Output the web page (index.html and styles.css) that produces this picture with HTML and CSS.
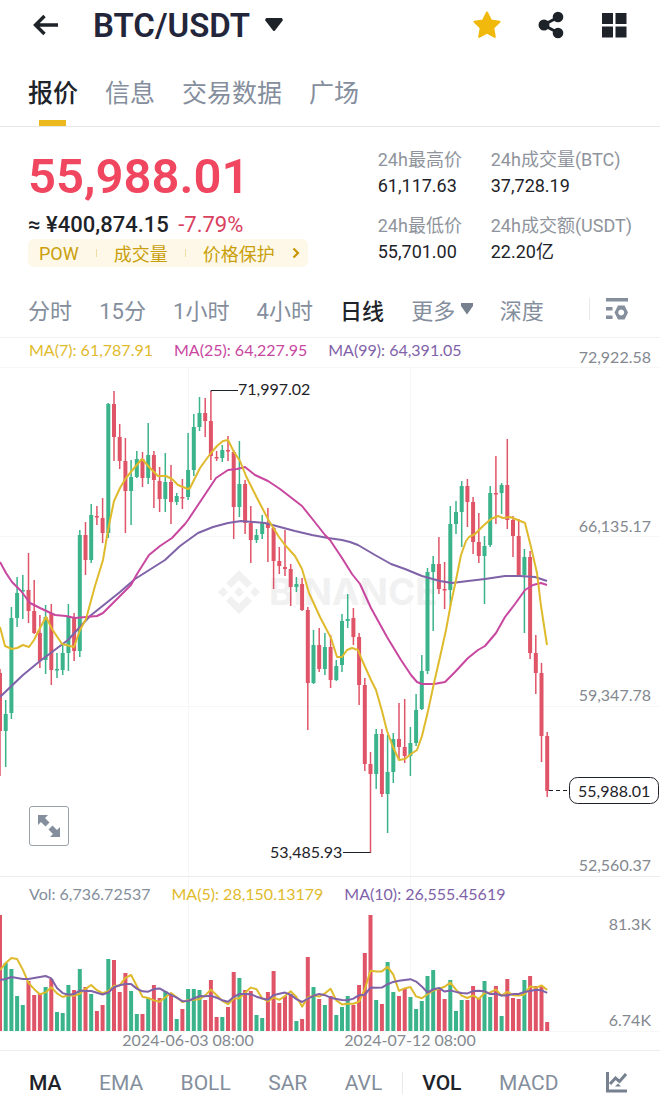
FILE: index.html
```html
<!DOCTYPE html>
<html lang="zh-CN">
<head>
    <meta charset="UTF-8">
    <meta name="viewport" content="width=device-width, initial-scale=1.0">
    <title>BTC/USDT</title>
    <link rel="stylesheet" href="styles.css">
</head>
<body>
    <header class="topbar">
        <button class="icon-btn" aria-label="返回">
            <svg width="28" height="24" viewBox="0 0 28 24"><path d="M26 12H4M12.500 3L3.500 12l9 9" fill="none" stroke="#1e2329" stroke-width="3.400"/></svg>
        </button>
        <button class="pair">BTC/USDT
            <svg width="18" height="14" viewBox="0 0 18 14"><path d="M1.500 0h15q1.500 0 1.200 2.500L10 12.500q-1 1-2 0L.3 2.500Q0 0 1.500 0z" fill="#1e2329"/></svg>
        </button>
        <div class="actions">
            <button class="icon-btn" aria-label="收藏">
                <svg width="28" height="28" viewBox="0 0 28 28"><path d="M14 1.500l4 8 8.500 1.200-6.200 6.200 1.500 9L14 21.700 6.200 25.900l1.500-9L1.500 10.700 10 9.500z" fill="#f0b90b" stroke="#f0b90b" stroke-width="2" stroke-linejoin="round"/></svg>
            </button>
            <button class="icon-btn" aria-label="分享">
                <svg width="26" height="28" viewBox="0 0 26 28"><path d="M20.500 6L5.500 14l15 8" fill="none" stroke="#1e2329" stroke-width="3"/><circle cx="20" cy="6" r="5.300" fill="#1e2329"/><circle cx="6" cy="14" r="5.500" fill="#1e2329"/><circle cx="20" cy="22" r="5.300" fill="#1e2329"/></svg>
            </button>
            <button class="icon-btn" aria-label="菜单">
                <svg width="26" height="26" viewBox="0 0 26 26"><path d="M1 1h11v11H1zM14.500 1h11v11h-11zM1 14.500h11v11H1zM14.500 14.500h11v11h-11z" fill="#1e2329"/></svg>
            </button>
        </div>
    </header>

    <nav class="tabs">
        <a href="#" class="active">报价</a>
        <a href="#">信息</a>
        <a href="#">交易数据</a>
        <a href="#">广场</a>
    </nav>

    <section class="quote">
        <div class="quote-main">
            <div class="price">55,988.01</div>
            <div class="fiat">≈ ¥400,874.15 <span class="change">-7.79%</span></div>
            <a href="#" class="tags">
                <span>POW</span><i></i><span>成交量</span><i></i><span>价格保护</span>
                <svg width="8" height="12" viewBox="0 0 8 12"><path d="M1.500 1.500L6 6l-4.500 4.500" fill="none" stroke="#c99400" stroke-width="2.200"/></svg>
            </a>
        </div>
        <dl class="stats">
            <div><dt>24h最高价</dt><dd>61,117.63</dd></div>
            <div><dt>24h成交量(BTC)</dt><dd>37,728.19</dd></div>
            <div><dt>24h最低价</dt><dd>55,701.00</dd></div>
            <div><dt>24h成交额(USDT)</dt><dd>22.20亿</dd></div>
        </dl>
    </section>

    <nav class="intervals">
        <button>分时</button>
        <button>15分</button>
        <button>1小时</button>
        <button>4小时</button>
        <button class="active">日线</button>
        <button class="dropdown">更多 <svg width="12" height="12" viewBox="0 0 12 12"><path d="M0 0h12v3L6 11.500 0 3z" fill="#76808f"/></svg></button>
        <button>深度</button>
        <button class="settings" aria-label="设置">
            <svg width="22" height="22" viewBox="0 0 22 22"><g fill="#848e9c"><path d="M0 0h22v3.500H0zM0 9h6.500v3.500H0zM0 17.500h6.500V21H0z"/><path fill-rule="evenodd" d="M12 7.500h6.500l3.500 7-3.500 7H12l-3.500-7zM15.200 11.500a3 3 0 1 0 .01 0z"/></g></svg>
        </button>
    </nav>

    <section class="chart">
        <div class="legend">
            <span class="ma-a">MA(7): 61,787.91</span>
            <span class="ma-b">MA(25): 64,227.95</span>
            <span class="ma-c">MA(99): 64,391.05</span>
        </div>
        <svg id="priceChart" viewBox="0 338 660 538"></svg>
        <button class="expand" aria-label="全屏">
            <svg width="26" height="26" viewBox="0 0 26 26"><g fill="#848e9c"><path d="M2 2h10L9 5l4.500 4.500-4 4L5 9l-3 3zM24 24H14l3-3-4.500-4.500 4-4L21 17l3-3z"/></g></svg>
        </button>
    </section>

    <section class="chart volume">
        <div class="legend">
            <span>Vol: 6,736.72537</span>
            <span class="ma-a">MA(5): 28,150.13179</span>
            <span class="ma-c">MA(10): 26,555.45619</span>
        </div>
        <svg id="volumeChart" viewBox="0 877 660 173"></svg>
    </section>

    <nav class="indicators">
        <button class="active">MA</button>
        <button>EMA</button>
        <button>BOLL</button>
        <button>SAR</button>
        <button>AVL</button>
        <i></i>
        <button class="active">VOL</button>
        <button>MACD</button>
        <button class="more" aria-label="指标">
            <svg width="21" height="21" viewBox="0 0 21 21"><path d="M1.500 0v19H21M4 12l5.500-6 4 3.500L20 2" fill="none" stroke="#76808f" stroke-width="3"/><path d="M9 14.500l3-3 3 3z" fill="#76808f"/></svg>
        </button>
    </nav>

    <script src="chart.js"></script>
</body>
</html>
```
FILE: styles.css
```css
* {
    box-sizing: border-box;
}
body {
    margin: 0;
    background-color: #fff;
    color: #1e2329;
    font-family: Roboto, "Noto Sans CJK SC", sans-serif;
}
button {
    padding: 0;
    border: none;
    background: none;
    color: inherit;
    font: inherit;
    white-space: nowrap;
    cursor: pointer;
}
a {
    color: inherit;
    text-decoration: none;
}
svg {
    display: block;
}
.topbar {
    display: flex;
    align-items: center;
    height: 50px;
    padding: 0 33px 0 32px;
}
.pair {
    display: flex;
    align-items: center;
    gap: 15px;
    margin-left: 33px;
    color: #23263b;
    font-size: 33px;
    font-weight: 600;
}
.actions {
    display: flex;
    align-items: center;
    gap: 37px;
    margin-left: auto;
}
.tabs {
    display: flex;
    gap: 27px;
    height: 77px;
    padding: 0 28px;
    border-bottom: 1px solid #e6e8ea;
    color: #848e9c;
    font-size: 25px;
    line-height: 88px;
}
.tabs a {
    position: relative;
    height: 76px;
}
.tabs .active {
    color: #1e2329;
    font-weight: 500;
}
.tabs .active::after {
    content: "";
    position: absolute;
    bottom: 0;
    left: 11px;
    width: 27px;
    height: 6px;
    background-color: #ebb91e;
}
.quote {
    display: flex;
    justify-content: space-between;
    height: 158px;
    padding: 20px 28px 0;
}
.price {
    color: #f0465f;
    font-size: 49px;
    font-weight: 600;
    line-height: 60px;
}
.fiat {
    padding-top: 4px;
    font-size: 22px;
    font-weight: 500;
    line-height: 28px;
}
.change {
    margin-left: 4px;
    color: #d9415f;
    font-weight: 400;
}
.tags {
    display: flex;
    align-items: center;
    gap: 17px;
    height: 28px;
    padding: 0 8px 0 11px;
    border-radius: 6px;
    background-color: #fef8e8;
    color: #c99f0c;
    font-size: 18px;
}
.tags i {
    width: 1px;
    height: 8px;
    background-color: #efdca6;
}
.stats {
    display: grid;
    grid-template-columns: 85px auto;
    gap: 14px 28px;
    align-content: start;
    margin: 0;
    font-size: 18px;
    line-height: 26px;
}
.stats dt {
    color: #8f949c;
    white-space: nowrap;
}
.stats dd {
    margin: 0;
}
.intervals {
    display: flex;
    align-items: center;
    justify-content: space-between;
    height: 53px;
    padding: 0 32px 4px 28px;
    border-bottom: 1px solid #f0f1f2;
    color: #848e9c;
    font-size: 22px;
}
.dropdown svg {
    display: inline-block;
    vertical-align: 4px;
}
.intervals .active,
.indicators .active {
    color: #1e2329;
    font-weight: 500;
}
.intervals .settings {
    margin-left: 18px;
    padding-left: 16px;
    border-left: 1px solid #e6e8ea;
}
.chart {
    position: relative;
    border-bottom: 1px solid #eaecef;
    font-family: Lato, sans-serif;
}
.chart > svg {
    width: 100%;
    height: auto;
}
.legend {
    position: absolute;
    top: 2px;
    left: 29px;
    display: flex;
    gap: 21px;
    color: #848e9c;
    font-size: 16px;
    line-height: 20px;
}
.volume .legend {
    top: 7px;
}
.ma-a {
    color: #dfba2c;
}
.ma-b {
    color: #c8479f;
}
.ma-c {
    color: #7f62a8;
}
.expand {
    position: absolute;
    bottom: 30px;
    left: 29px;
    display: grid;
    place-items: center;
    width: 40px;
    height: 40px;
    border: 1px solid #9aa1ab;
    border-radius: 3px;
    background-color: #fff;
}
.indicators {
    display: flex;
    align-items: center;
    justify-content: space-between;
    height: 55px;
    padding: 8px 33px 0 29px;
    color: #848e9c;
    font-size: 21px;
}
.indicators i {
    width: 1px;
    height: 22px;
    margin: 0 -18px;
    background-color: #e6e8ea;
}
.indicators .more {
    margin-left: 10px;
}
/* chart */
.up {
    fill: #3bb38b;
}
.down {
    fill: #e05468;
}
.grid {
    stroke: #f7f7f8;
    stroke-width: 1;
}
.line {
    fill: none;
    stroke-width: 2;
    stroke-linejoin: round;
}
.line.ma-a {
    stroke: #dfba2c;
}
.line.ma-b {
    stroke: #c8479f;
}
.line.ma-c {
    stroke: #7f62a8;
}
.axis {
    fill: #84888f;
    font-size: 16px;
    text-anchor: end;
}
.date {
    fill: #84888f;
    font-size: 16px;
    text-anchor: middle;
}
.mark {
    fill: #1e2329;
    font-size: 16px;
}
.leader {
    fill: none;
    stroke: #1e2329;
    stroke-width: 1;
}
.last-box {
    fill: #fff;
    stroke: #1e2329;
}
.watermark {
    fill: #f1f1f2;
    font-family: Inter, sans-serif;
    font-size: 37px;
    font-weight: 700;
}
```
FILE: chart.js
```js
const STEP = 5.7;

// high, body top, body bottom, low (chart y), direction
const candles = [
    [669,673,731,776,'d'],[700,714,731,767,'u'],[607,618,713,719,'u'],[577,593,618,627,'u'],[575,590,591,619,'u'],
    [553,590,611,623,'d'],[580,611,633,634,'d'],[615,633,661,668,'d'],[605,617,660,674,'u'],[604,613,670,685,'d'],
    [653,669,670,678,'u'],[645,653,670,675,'u'],[604,616,653,671,'u'],[613,617,651,661,'d'],[530,535,651,657,'u'],
    [522,535,560,575,'d'],[504,515,560,563,'u'],[506,516,517,525,'d'],[498,518,533,543,'d'],[403,404,533,538,'u'],
    [391,404,437,461,'d'],[424,437,461,469,'d'],[438,461,491,533,'d'],[460,477,491,525,'u'],[451,459,477,478,'u'],
    [452,459,478,487,'d'],[423,455,478,484,'u'],[451,455,480,508,'d'],[467,481,499,512,'d'],[453,482,499,512,'u'],
    [465,482,502,524,'d'],[493,496,502,505,'u'],[479,497,498,509,'d'],[433,470,497,500,'u'],[414,427,470,476,'u'],
    [397,413,427,431,'u'],[398,413,421,437,'d'],[391,421,456,480,'d'],[451,457,458,461,'d'],[445,450,458,462,'u'],
    [436,450,451,461,'d'],[450,452,507,539,'d'],[441,484,507,517,'u'],[480,484,523,534,'d'],[506,523,540,563,'d'],
    [529,535,540,543,'u'],[515,523,534,539,'u'],[508,523,528,562,'d'],[527,528,561,589,'d'],[547,561,566,574,'d'],
    [530,567,569,576,'d'],[564,569,587,606,'d'],[577,584,587,592,'u'],[578,584,610,611,'d'],[607,610,683,730,'d'],
    [630,645,683,684,'u'],[628,645,669,672,'d'],[633,647,669,675,'u'],[635,647,680,688,'d'],[660,666,680,681,'u'],
    [614,621,665,672,'u'],[594,619,621,628,'u'],[608,618,637,645,'d'],[633,637,685,705,'d'],[678,685,764,771,'d'],
    [752,764,774,853,'d'],[729,734,774,789,'u'],[729,734,794,797,'d'],[735,772,794,833,'u'],[733,739,772,783,'u'],
    [703,739,747,760,'d'],[699,747,756,763,'d'],[727,743,756,776,'u'],[694,710,743,746,'u'],[655,671,709,710,'u'],
    [568,572,671,674,'u'],[556,564,572,631,'u'],[537,564,589,594,'d'],[562,589,590,609,'d'],[506,524,590,607,'u'],
    [501,512,524,534,'u'],[481,486,512,547,'u'],[479,486,502,527,'d'],[497,502,542,554,'d'],[513,542,556,563,'d'],
    [536,546,556,604,'u'],[486,493,545,547,'u'],[456,493,494,524,'d'],[483,485,493,514,'u'],[439,485,520,529,'d'],
    [516,520,536,557,'d'],[519,536,576,576,'d'],[549,557,575,633,'u'],[551,557,653,659,'d'],[635,653,673,694,'d'],
    [663,673,736,762,'d'],[732,736,791,797,'d']
];

const volumes = [
    116,68,62,35,26,50,36,37,44,52,19,18,46,41,62,44,37,20,26,72,71,39,58,40,17,17,33,46,33,40,38,12,22,42,42,41,
    31,51,14,14,24,59,53,41,40,16,13,39,60,28,35,37,10,12,74,44,32,26,35,16,24,35,26,46,78,116,31,27,69,39,35,43,
    34,22,30,55,61,43,32,51,20,31,31,45,33,50,34,45,15,52,33,32,51,55,45,45,9
];

const ma7 = '0,627 5,646 12,649 17,648 23,645 29,647 34,640 40,628 46,617 52,629 62,644 74,647 80,630 86,619 95,586 103,560 108,530 114,501 120,488 126,478 135,467 142,459 150,468 158,476 166,476 172,479 178,485 188,489 190,488 194,480 200,468 205,461 211,453 217,446 223,441 228,440 234,452 240,461 246,476 257,498 269,521 279,537 285,545 295,556 302,569 309,593 320,617 331,638 337,657 342,657 347,650 352,648 358,650 362,660 371,680 376,690 382,711 387,731 393,747 399,760 405,759 411,754 417,750 422,736 428,711 434,683 440,657 446,630 451,603 456,580 461,555 466,541 469,537 475,534 483,526 491,519 498,516 503,518 510,517 518,520 525,523 531,547 537,573 541,606 547,645';
const ma25 = '0,562 6,573 12,582 21,591 30,603 40,608 55,615 66,616 75,618 86,617 97,616 103,613 114,602 131,585 137,574 149,555 160,546 172,538 185,524 188,520 200,502 208,490 216,478 228,470 237,469 245,467 255,475 268,481 280,489 302,506 314,521 325,535 330,540 342,558 352,574 360,584 371,608 387,637 401,660 411,675 417,682 422,684 434,684 445,682 455,672 468,658 478,650 485,646 496,633 505,617 515,604 525,590 533,585 541,583 547,585';
const ma99 = '0,697 23,675 40,661 68,640 90,616 120,592 135,579 165,560 180,546 198,533 213,527 228,523 241,521 265,523 280,527 295,531 312,535 328,538 342,540 350,542 358,545 375,555 391,564 405,569 422,576 440,581 452,583 468,581 485,579 505,576 520,576 535,577 547,581';

function rect(x, y, w, h, cls) {
    return `<rect x="${x}" y="${y}" width="${w}" height="${h}" class="${cls}"/>`;
}
function hline(y) {
    return `<path class="grid" d="M0 ${y}H660"/>`;
}
function average(period, seed) {
    return volumes.map((v, i) => {
        const avg = i < seed.length
            ? seed[i]
            : volumes.slice(i - period + 1, i + 1).reduce((a, b) => a + b, 0) / period;
        return `${i * STEP},${1031 - avg}`;
    }).join(' ');
}

// Price chart
let out = [367.5, 536.5, 706.5].map(hline).join('');
out += '<path class="grid" d="M188.5 367V876M410.5 367V876"/>';
out += `<g class="watermark">
    <path d="M239 570l13 13-5 5-8-8-8 8-5-5zM223 587l5 5-5 5-5-5zM255 587l5 5-5 5-5-5zM239 587l5 5-5 5-5-5zM226 601l5-5 8 8 8-8 5 5-13 13z"/>
    <text x="269" y="605">BINANCE</text></g>`;
candles.forEach(([high, top, bottom, low, dir], i) => {
    const x = i * STEP;
    const cls = dir === 'u' ? 'up' : 'down';
    out += rect(x - 0.75, high, 1.5, low - high, cls);
    out += rect(x - 2, top, 4, Math.max(bottom - top, 1.5), cls);
});
out += `<polyline class="line ma-c" points="${ma99}"/>`;
out += `<polyline class="line ma-b" points="${ma25}"/>`;
out += `<polyline class="line ma-a" points="${ma7}"/>`;
out += '<path class="leader" d="M211 391.5V390.5H238"/><text class="mark" x="238" y="395">71,997.02</text>';
out += '<path class="leader" d="M343 852.5H370.500"/><text class="mark" x="270" y="858">53,485.93</text>';
out += '<text class="axis" x="651" y="363">72,922.58</text><text class="axis" x="651" y="532">66,135.17</text>';
out += '<text class="axis" x="651" y="701">59,347.78</text><text class="axis" x="651" y="871">52,560.37</text>';
out += '<path class="leader" d="M549 790.5H569" stroke-dasharray="4 3"/>';
out += '<rect class="last-box" x="569.5" y="777.5" width="89" height="26" rx="8"/><text class="mark" x="578" y="797">55,988.01</text>';
document.getElementById('priceChart').innerHTML = out;

// Volume chart
out = hline(1031.5) + '<path class="grid" d="M188.5 877V1031M410.5 877V1031"/>';
volumes.forEach((v, i) => {
    out += rect(i * STEP - 2, 1031 - v, 4, v, candles[i][4] === 'u' ? 'up' : 'down');
});
out += `<polyline class="line ma-a" points="${average(5, [61, 68, 73, 72])}"/>`;
out += `<polyline class="line ma-c" points="${average(10, [51, 52, 54, 53, 52, 52, 53, 54, 55])}"/>`;
out += '<text class="axis" x="651" y="930">81.3K</text><text class="axis" x="651" y="1026">6.74K</text>';
out += '<text class="date" x="188" y="1046">2024-06-03 08:00</text><text class="date" x="410" y="1046">2024-07-12 08:00</text>';
document.getElementById('volumeChart').innerHTML = out;
```
